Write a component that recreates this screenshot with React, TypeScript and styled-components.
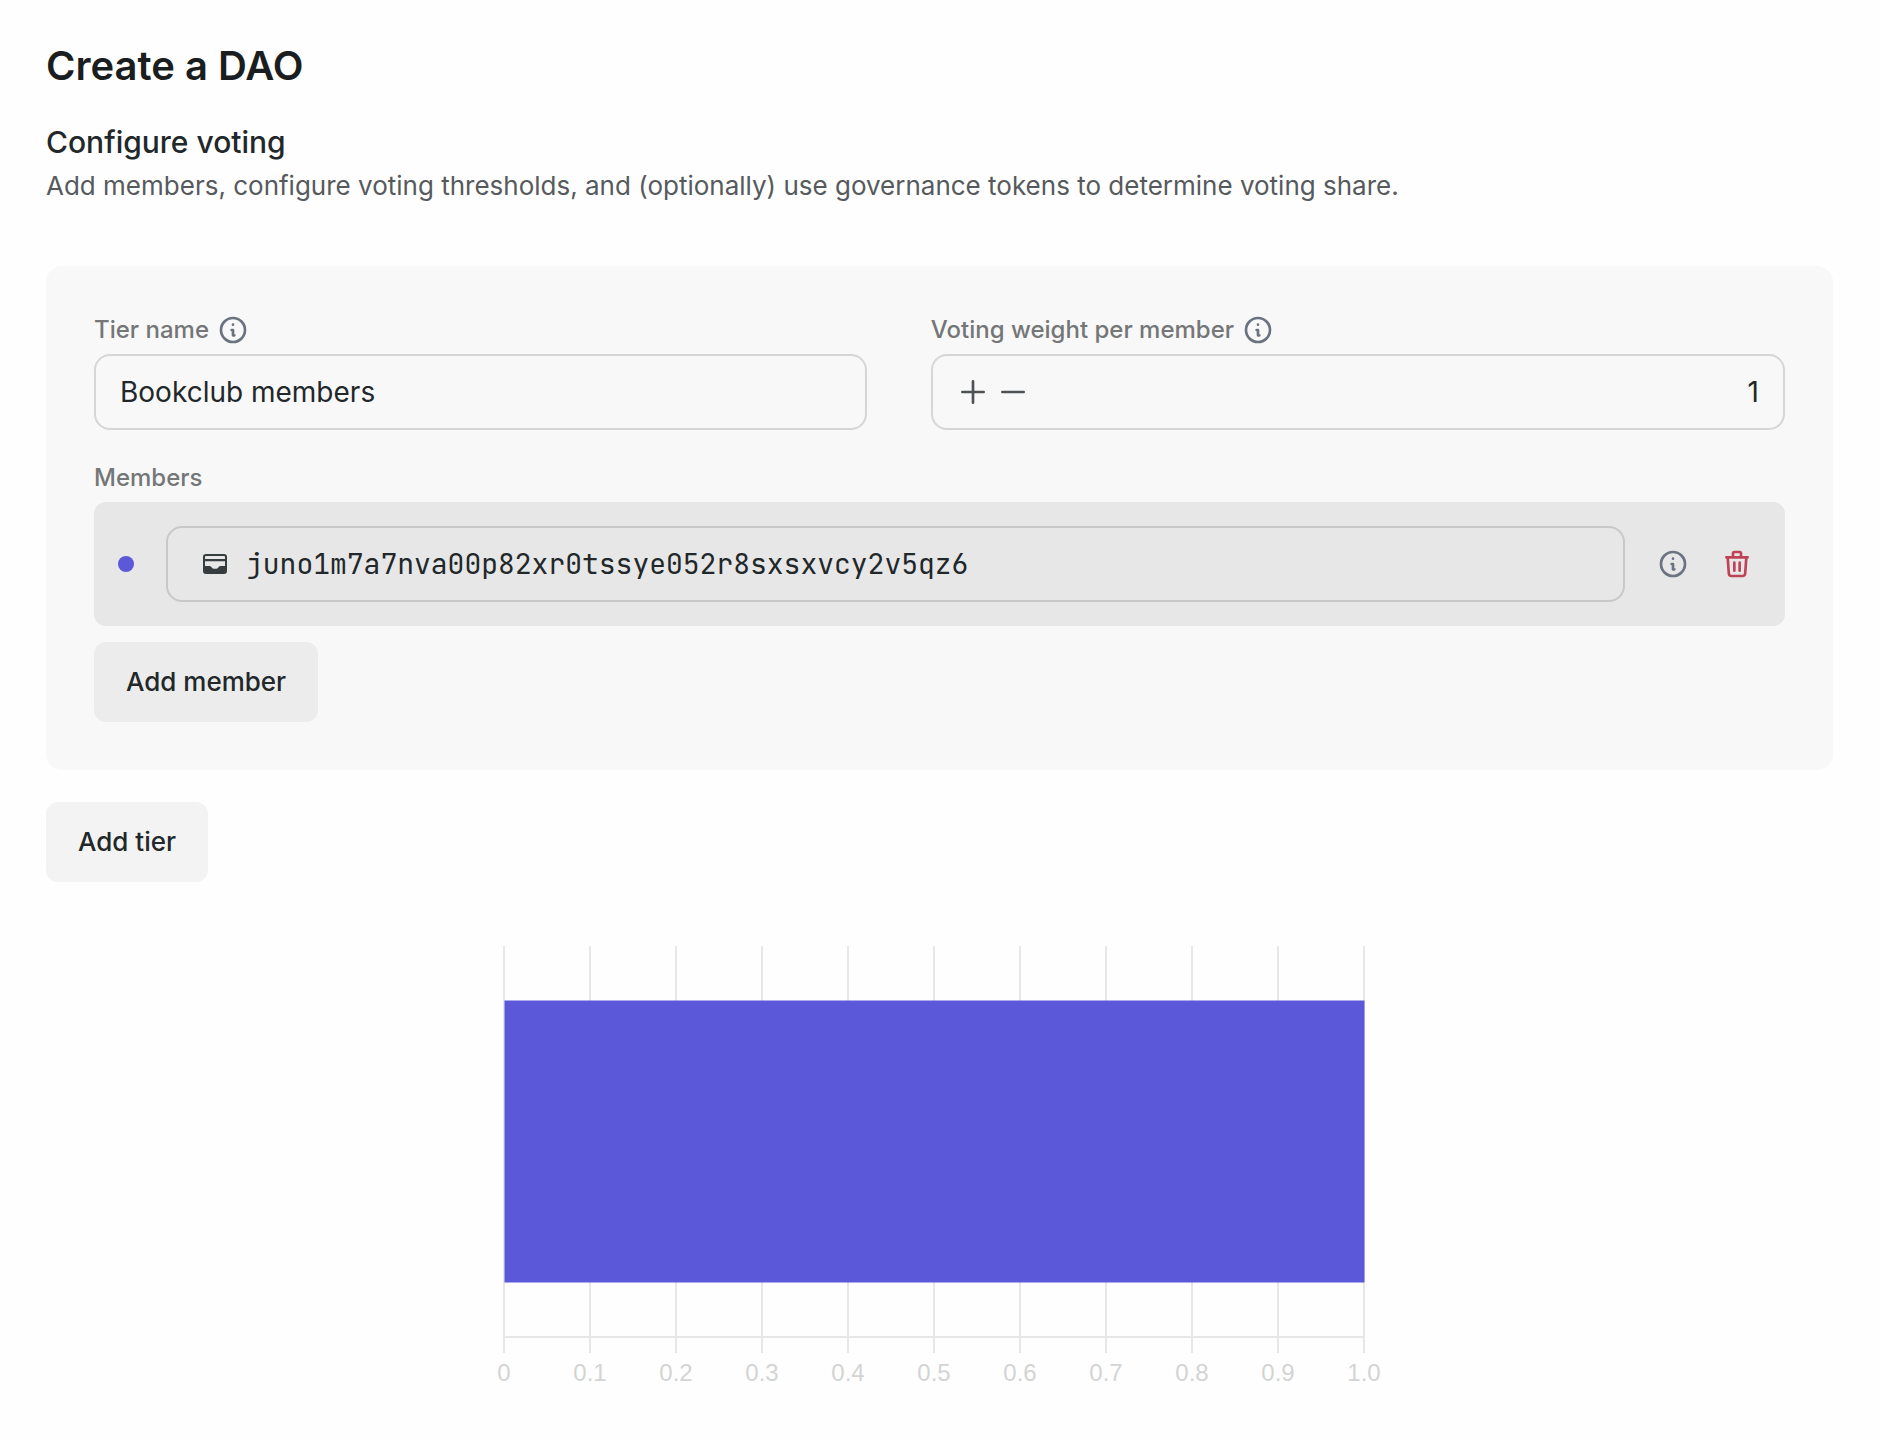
import React, { useState } from "react";
import styled, { createGlobalStyle } from "styled-components";

const GlobalStyle = createGlobalStyle`
  *, *::before, *::after { box-sizing: border-box; }
  body {
    margin: 0;
    background: #fefefe;
    color: #22272a;
    font-family: Inter, "Liberation Sans", sans-serif;
  }
  button, input { font: inherit; color: inherit; }
`;

const Page = styled.main`
  padding: 42px 47px 40px 46px;
`;

const Title = styled.h1`
  margin: 0 0 32px;
  font-size: 40px;
  line-height: 48px;
  font-weight: 600;
  color: #1a1e20;
`;

const Heading = styled.h2`
  margin: 0 0 4px;
  font-size: 30px;
  line-height: 40px;
  font-weight: 500;
`;

const Description = styled.p`
  margin: 0 0 60px;
  font-size: 26px;
  line-height: 40px;
  color: #565a5c;
`;

const TierCard = styled.section`
  display: flex;
  flex-direction: column;
  gap: 32px;
  margin-bottom: 32px;
  padding: 48px;
  border-radius: 16px;
  background: #f8f8f8;
`;

const FieldGrid = styled.div`
  display: grid;
  grid-template-columns: minmax(0, 19fr) minmax(0, 21fr);
  gap: 64px;
`;

const Field = styled.div`
  display: flex;
  flex-direction: column;
  gap: 8px;
`;

const LabelRow = styled.div`
  display: flex;
  align-items: center;
  gap: 8px;
  height: 32px;
  font-size: 24px;
  line-height: 32px;
  font-weight: 500;
  color: #747677;
`;

const InputBox = styled.div<{ $dark?: boolean }>`
  display: flex;
  flex: 1 1 auto;
  align-items: center;
  gap: 8px;
  min-width: 0;
  height: 76px;
  padding: 0 24px;
  border: 2px solid ${(p) => (p.$dark ? "#c8c8c8" : "#d6d6d6")};
  border-radius: 16px;
`;

const TextInput = styled.input<{ $mono?: boolean; $end?: boolean }>`
  flex: 1;
  width: 100%;
  min-width: 0;
  height: 40px;
  padding: 0;
  border: 0;
  outline: 0;
  background: transparent;
  font-family: ${(p) =>
    p.$mono ? '"JetBrains Mono", "Liberation Mono", monospace' : "inherit"};
  font-size: 28px;
  line-height: 40px;
  text-align: ${(p) => (p.$end ? "right" : "left")};
  color: #22272a;
`;

const IconButton = styled.button<{ $color: string }>`
  display: flex;
  flex: none;
  padding: 0;
  border: 0;
  background: none;
  color: ${(p) => p.$color};
  cursor: pointer;
`;

const MemberRow = styled.div`
  display: flex;
  align-items: center;
  gap: 32px;
  padding: 24px 32px 24px 24px;
  border-radius: 12px;
  background: #e7e7e7;
`;

const Dot = styled.span`
  flex: none;
  width: 16px;
  height: 16px;
  border-radius: 50%;
  background: #5b58d9;
`;

const WalletSlot = styled.span`
  display: flex;
  justify-content: center;
  flex: none;
  width: 46px;
`;

const Button = styled.button<{ $tone: string }>`
  align-self: flex-start;
  height: 80px;
  margin: 0;
  padding: 0 32px;
  border: 0;
  border-radius: 12px;
  background: ${(p) => p.$tone};
  font-size: 26px;
  line-height: 40px;
  font-weight: 500;
  cursor: pointer;
`;

const MemberList = styled.div`
  display: flex;
  flex-direction: column;
  gap: 8px;
`;

const MemberActions = styled.div`
  display: flex;
  margin-top: 8px;
`;

const ChartFrame = styled.figure`
  max-width: 912px;
  margin: 64px auto 0;
`;

const ChartSvg = styled.svg`
  display: block;
  width: 100%;
  height: auto;
  font-family: "Liberation Sans", Arial, sans-serif;
  font-size: 24px;
`;

type IconProps = { d: string; width?: number };

function LineIcon({ d, width = 2 }: IconProps) {
  return (
    <svg
      width="32"
      height="32"
      viewBox="0 0 24 24"
      fill="none"
      stroke="currentColor"
      strokeWidth={width}
      strokeLinecap="round"
      strokeLinejoin="round"
      aria-hidden="true"
    >
      <path d={d} />
    </svg>
  );
}

const INFO = "M13 16h-1v-4h-1m1-4h.01M21 12a9 9 0 11-18 0 9 9 0 0118 0z";
const TRASH =
  "M19 7l-.867 12.142A2 2 0 0116.138 21H7.862a2 2 0 01-1.995-1.858L5 7m5 4v6m4-6v6m1-10V4a1 1 0 00-1-1h-4a1 1 0 00-1 1v3M4 7h16";

function WalletIcon() {
  return (
    <svg width="24" height="20" viewBox="0 0 24 20" aria-hidden="true">
      <path
        fill="#373c3f"
        fillRule="evenodd"
        d="M3 0h18a3 3 0 0 1 3 3v14a3 3 0 0 1-3 3H3a3 3 0 0 1-3-3V3a3 3 0 0 1 3-3zM3 2a1 1 0 0 0-1 1v2h20V3a1 1 0 0 0-1-1zM2 7.300v4.700h4.500c.6 0 1 .2 1.400.6l1.300 1.500c.4.500.8.700 1.400.700h2.800c.6 0 1-.2 1.400-.7l1.300-1.500c.4-.4.800-.6 1.400-.6H22V7.300z"
      />
    </svg>
  );
}

const TICKS = ["0", "0.1", "0.2", "0.3", "0.4", "0.5", "0.6", "0.7", "0.8", "0.9", "1.0"];
const STEP = 86;
const ORIGIN = 20;

function VotingChart({ share }: { share: number }) {
  const span = STEP * (TICKS.length - 1);
  return (
    <ChartFrame>
      <ChartSvg viewBox="0 0 912 448" role="img" aria-label="Voting share">
        {TICKS.map((tick, i) => (
          <g key={tick}>
            <rect x={ORIGIN + i * STEP - 1} y="0" width="2" height="407" fill="#e7e7e7" />
            <text x={ORIGIN + i * STEP} y="435" textAnchor="middle" fill="#d3d4d4">
              {tick}
            </text>
          </g>
        ))}
        <rect x={ORIGIN} y="390" width={span} height="2" fill="#e7e7e7" />
        <rect x={ORIGIN + 0.5} y="54.500" width={span * share} height="282" fill="#5b58d9" />
      </ChartSvg>
    </ChartFrame>
  );
}

export default function App() {
  const [name, setName] = useState("Bookclub members");
  const [weight, setWeight] = useState(1);
  const [address, setAddress] = useState("juno1m7a7nva00p82xr0tssye052r8sxsxvcy2v5qz6");

  return (
    <>
      <GlobalStyle />
      <Page>
        <Title>Create a DAO</Title>
        <Heading>Configure voting</Heading>
        <Description>
          Add members, configure voting thresholds, and (optionally) use governance tokens to
          determine voting share.
        </Description>

        <TierCard>
          <FieldGrid>
            <Field>
              <LabelRow>
                <label htmlFor="tier-name">Tier name</label>
                <IconButton type="button" $color="#6b7280" aria-label="About tier name">
                  <LineIcon d={INFO} />
                </IconButton>
              </LabelRow>
              <InputBox>
                <TextInput id="tier-name" value={name} onChange={(e) => setName(e.target.value)} />
              </InputBox>
            </Field>
            <Field>
              <LabelRow>
                <label htmlFor="weight">Voting weight per member</label>
                <IconButton type="button" $color="#6b7280" aria-label="About voting weight">
                  <LineIcon d={INFO} />
                </IconButton>
              </LabelRow>
              <InputBox>
                <IconButton
                  type="button"
                  $color="#4e5254"
                  aria-label="Increase"
                  onClick={() => setWeight(weight + 1)}
                >
                  <LineIcon d="M12 4v16M4 12h16" />
                </IconButton>
                <IconButton
                  type="button"
                  $color="#4e5254"
                  aria-label="Decrease"
                  onClick={() => setWeight(Math.max(0, weight - 1))}
                >
                  <LineIcon d="M4 12h16" />
                </IconButton>
                <TextInput
                  id="weight"
                  $end
                  inputMode="numeric"
                  value={weight}
                  onChange={(e) => setWeight(Number(e.target.value) || 0)}
                />
              </InputBox>
            </Field>
          </FieldGrid>

          <MemberList>
            <LabelRow>
              <label htmlFor="member-address">Members</label>
            </LabelRow>
            <MemberRow>
              <Dot />
              <InputBox $dark>
                <WalletSlot>
                  <WalletIcon />
                </WalletSlot>
                <TextInput
                  id="member-address"
                  $mono
                  spellCheck={false}
                  value={address}
                  onChange={(e) => setAddress(e.target.value)}
                />
              </InputBox>
              <IconButton type="button" $color="#6b7280" aria-label="About member">
                <LineIcon d={INFO} />
              </IconButton>
              <IconButton type="button" $color="#bf4358" aria-label="Remove member">
                <LineIcon d={TRASH} />
              </IconButton>
            </MemberRow>
            <MemberActions>
              <Button type="button" $tone="#ececec">
                Add member
              </Button>
            </MemberActions>
          </MemberList>
        </TierCard>

        <Button type="button" $tone="#f3f3f3">
          Add tier
        </Button>

        <VotingChart share={1} />
      </Page>
    </>
  );
}
